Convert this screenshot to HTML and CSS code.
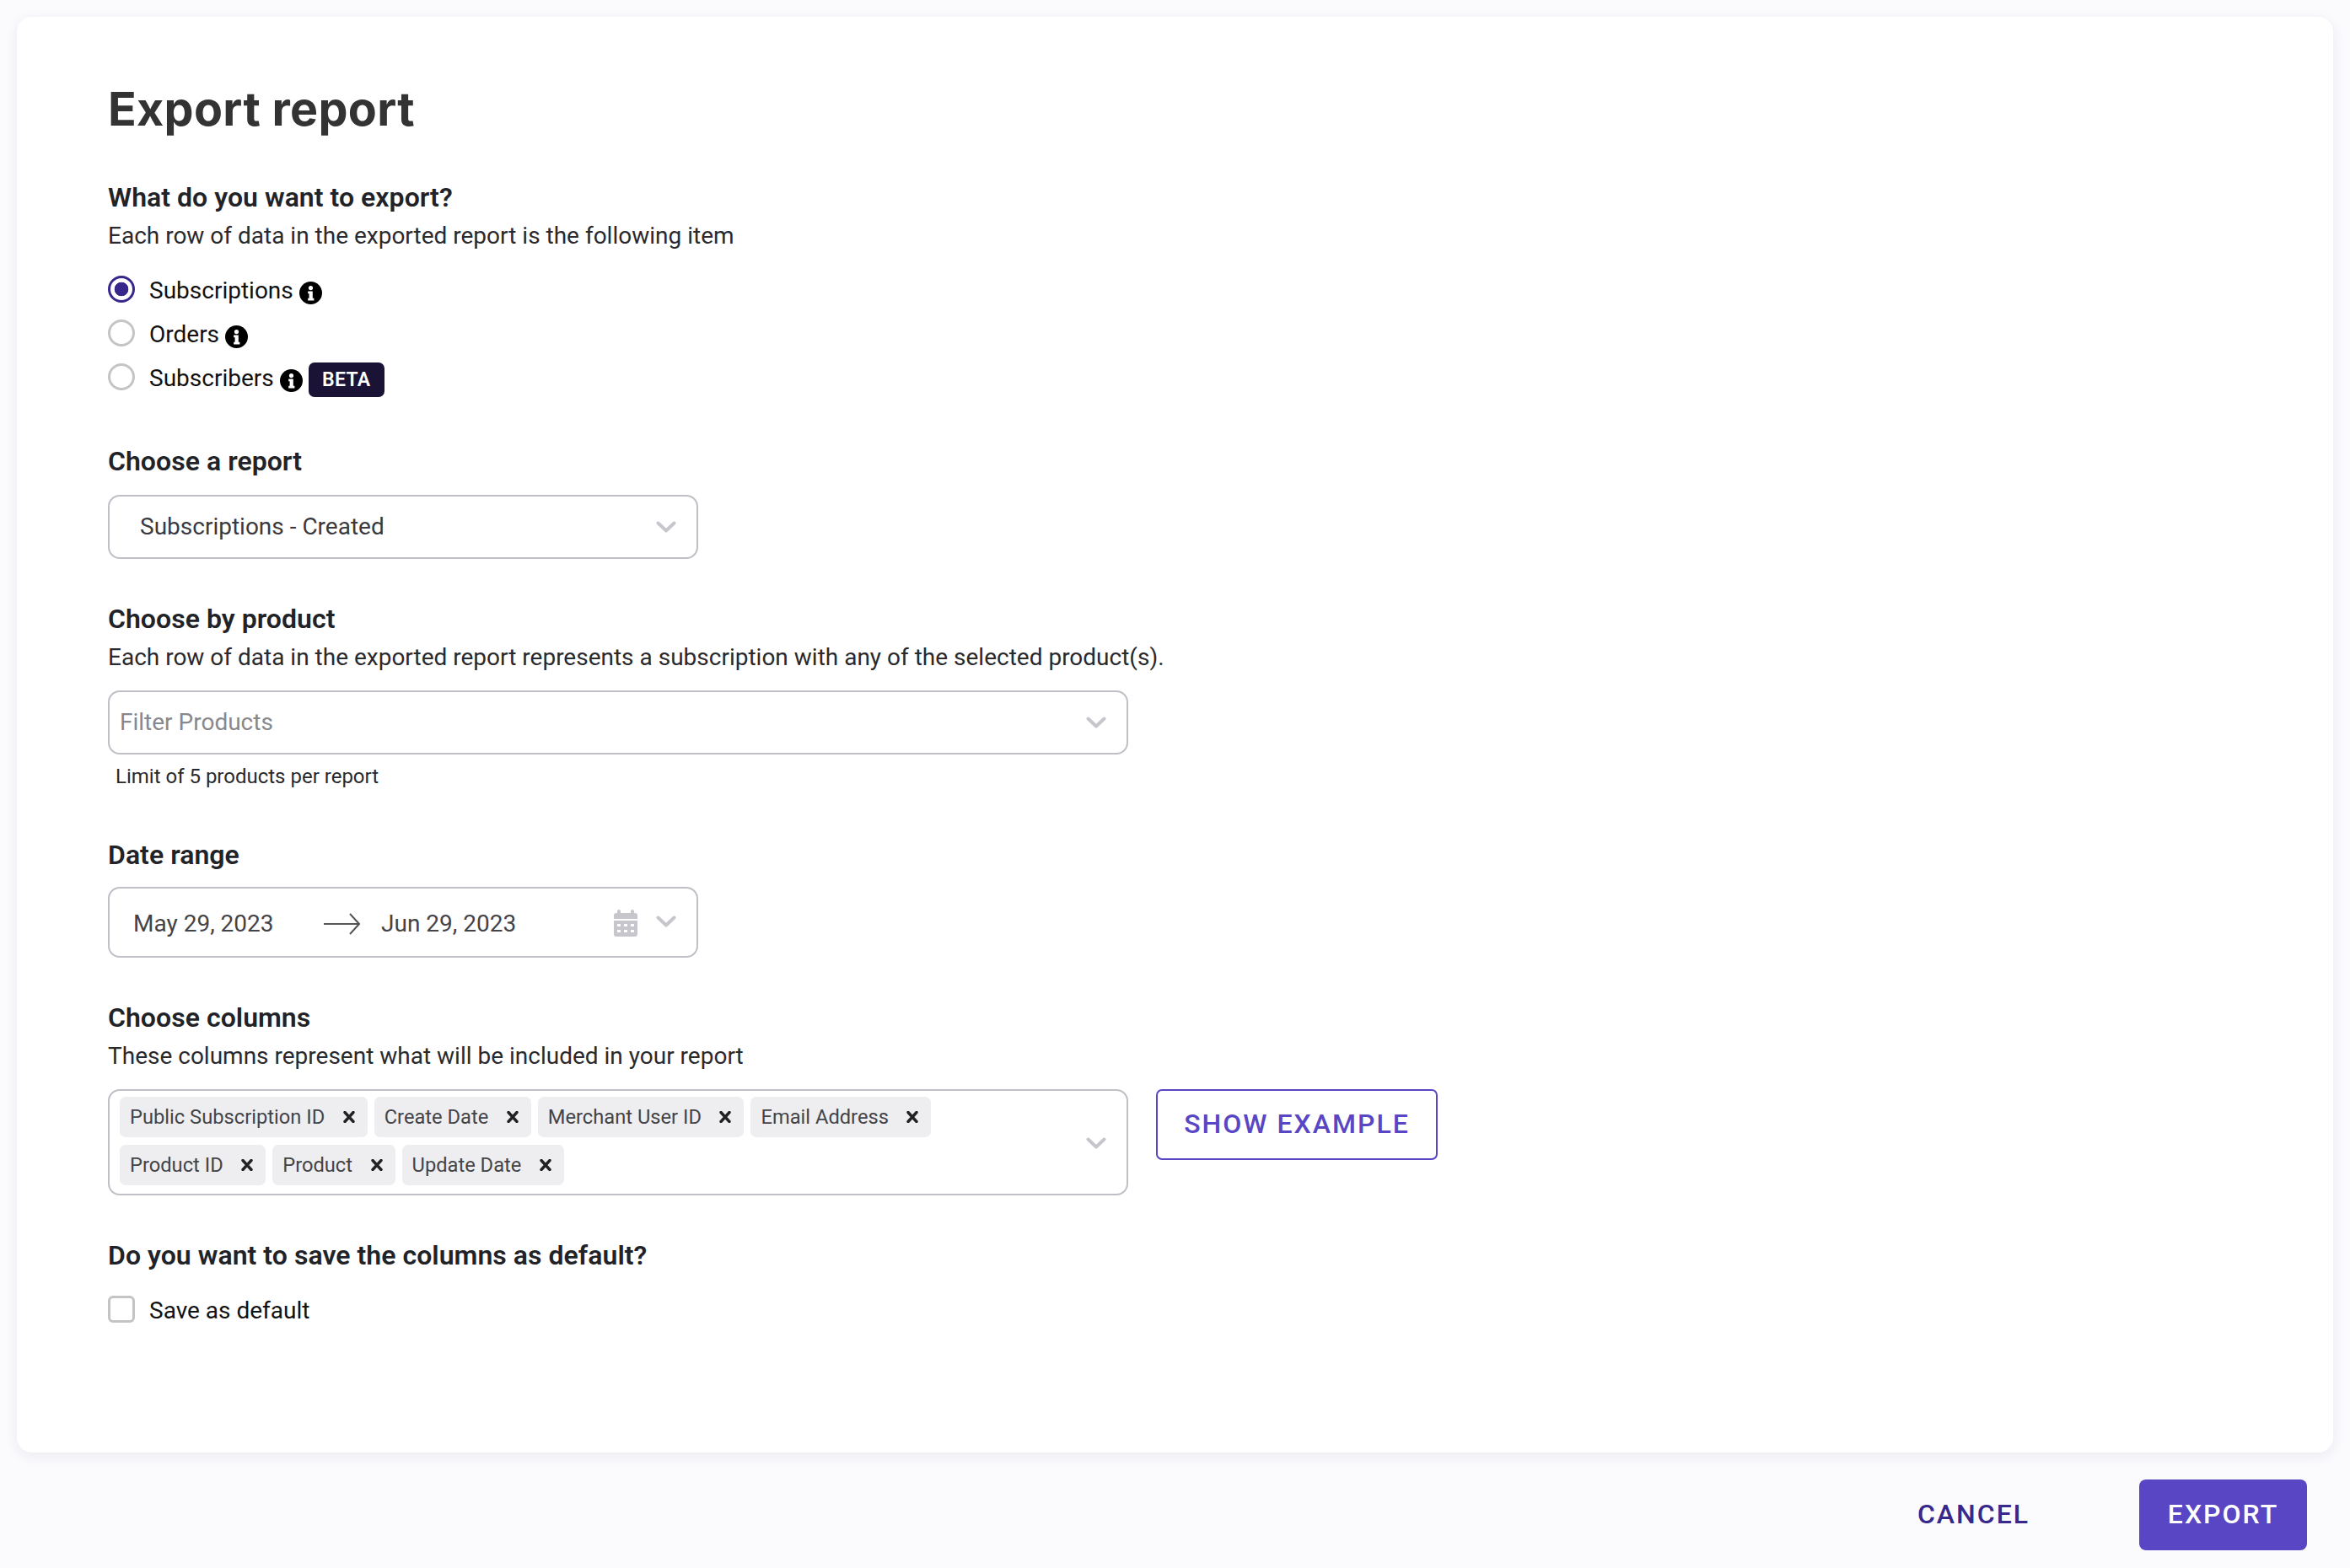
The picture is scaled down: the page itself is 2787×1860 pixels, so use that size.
FILE: index.html
```html
<!DOCTYPE html>
<html lang="en">
<head>
<meta charset="utf-8">
<title>Export report</title>
<link rel="stylesheet" href="styles.css">
</head>
<body>
<svg class="sprite" width="0" height="0" aria-hidden="true">
  <symbol id="chev" viewBox="0 0 24 14"><path d="M2.5 2.5 12 11.5 21.5 2.5" fill="none" stroke="currentColor" stroke-width="4" stroke-linecap="round" stroke-linejoin="round"/></symbol>
  <symbol id="info" viewBox="0 0 27 27"><circle cx="13.5" cy="13.5" r="13.5" fill="#000"/><circle cx="13.5" cy="7.6" r="2.6" fill="#fff"/><path d="M10.2 11.6h5.6v8.2h1.6v2.6h-7.2v-2.6h1.4v-5.6h-1.4z" fill="#fff"/></symbol>
  <symbol id="x" viewBox="0 0 14 14"><path d="M2 1.5 12 12.5M12 1.5 2 12.5" fill="none" stroke="#222" stroke-width="3.4" stroke-linecap="round"/></symbol>
</svg>
<main class="card">
  <h1 class="title">Export report</h1>

  <h2 class="heading">What do you want to export?</h2>
  <p class="desc">Each row of data in the exported report is the following item</p>
  <div class="radios">
    <label class="radio-row"><span class="radio radio-on"></span><span class="radio-label">Subscriptions</span><svg class="info"><use href="#info"/></svg></label>
    <label class="radio-row"><span class="radio"></span><span class="radio-label">Orders</span><svg class="info"><use href="#info"/></svg></label>
    <label class="radio-row"><span class="radio"></span><span class="radio-label">Subscribers</span><svg class="info"><use href="#info"/></svg><span class="badge">BETA</span></label>
  </div>

  <h2 class="heading gap-report">Choose a report</h2>
  <div class="field field-narrow field-report">
    <span class="value">Subscriptions - Created</span>
    <svg class="chev"><use href="#chev"/></svg>
  </div>

  <h2 class="heading gap-section">Choose by product</h2>
  <p class="desc">Each row of data in the exported report represents a subscription with any of the selected product(s).</p>
  <div class="field field-wide field-product">
    <span class="value placeholder">Filter Products</span>
    <svg class="chev"><use href="#chev"/></svg>
  </div>
  <p class="hint">Limit of 5 products per report</p>

  <h2 class="heading gap-date">Date range</h2>
  <div class="field field-narrow field-date">
    <span class="date date-start">May 29, 2023</span>
    <svg class="arrow" viewBox="0 0 44 26"><path d="M1 13H42M32 1 43 13 32 25" fill="none" stroke="#555" stroke-width="2"/></svg>
    <span class="date date-end">Jun 29, 2023</span>
    <svg class="calendar" viewBox="0 0 28 32"><path d="M6 0a2 2 0 0 1 2 2v2h12V2a2 2 0 0 1 4 0v2h1a3 3 0 0 1 3 3v4H0V7a3 3 0 0 1 3-3h1V2a2 2 0 0 1 2-2zM0 13h28v16a3 3 0 0 1-3 3H3a3 3 0 0 1-3-3zm4 4v3h4v-3zm8 0v3h4v-3zm8 0v3h4v-3zM4 24v3h4v-3zm8 0v3h4v-3zm8 0v3h4v-3z" fill="#c6c6cc" fill-rule="evenodd"/></svg>
    <svg class="chev"><use href="#chev"/></svg>
  </div>

  <h2 class="heading gap-section">Choose columns</h2>
  <p class="desc">These columns represent what will be included in your report</p>
  <div class="columns-row">
    <div class="field-tags">
      <div class="tags">
        <span class="tag">Public Subscription ID<svg class="tag-x"><use href="#x"/></svg></span>
        <span class="tag">Create Date<svg class="tag-x"><use href="#x"/></svg></span>
        <span class="tag">Merchant User ID<svg class="tag-x"><use href="#x"/></svg></span>
        <span class="tag">Email Address<svg class="tag-x"><use href="#x"/></svg></span>
        <span class="tag">Product ID<svg class="tag-x"><use href="#x"/></svg></span>
        <span class="tag">Product<svg class="tag-x"><use href="#x"/></svg></span>
        <span class="tag">Update Date<svg class="tag-x"><use href="#x"/></svg></span>
      </div>
      <svg class="chev"><use href="#chev"/></svg>
    </div>
    <button class="btn-outline" type="button"><span class="btn-label">SHOW EXAMPLE</span></button>
  </div>

  <h2 class="heading gap-section">Do you want to save the columns as default?</h2>
  <label class="check-row"><span class="checkbox"></span><span class="radio-label">Save as default</span></label>
</main>
<footer class="footer">
  <button class="btn-text" type="button"><span class="btn-label">CANCEL</span></button>
  <button class="btn-primary" type="button"><span class="btn-label">EXPORT</span></button>
</footer>
</body>
</html>
```
FILE: styles.css
```css
* { box-sizing: border-box; }
html, body { margin: 0; padding: 0; }
body {
  width: 2787px;
  height: 1860px;
  background: #fbfbfe;
  font-family: Roboto, "Liberation Sans", sans-serif;
  color: #212121;
  overflow: hidden;
}
.sprite { position: absolute; }
.card {
  margin: 20px 20px 0;
  height: 1703px;
  padding: 77px 108px 0;
  background: #fff;
  border-radius: 18px;
  box-shadow: 0 4px 16px rgba(40, 40, 80, 0.08);
}
.title {
  margin: 0 0 54px;
  font: 700 55.6px/64px Inter, sans-serif;
  letter-spacing: 0.3px;
  color: #333;
}
.heading {
  margin: 0;
  font-size: 32px;
  line-height: 38px;
  font-weight: 600;
  letter-spacing: 0.04px;
  color: #212328;
}
.desc {
  margin: 9px 0 0;
  font-size: 28px;
  line-height: 36px;
  color: #2a2a2e;
}
.radios {
  margin-top: 29px;
  display: flex;
  flex-direction: column;
  gap: 20px;
}
.radio-row, .check-row {
  display: flex;
  align-items: center;
  height: 32px;
}
.radio {
  width: 32px;
  height: 32px;
  flex: none;
  border-radius: 50%;
  border: 3px solid #c4c4c4;
  background: #fff;
  margin-right: 17px;
}
.radio-on {
  border-color: #38288c;
  background: radial-gradient(circle, #38288c 0 8px, #fff 8.6px);
}
.radio-label {
  margin-top: 3px;
  font-size: 28px;
  line-height: 36px;
  color: #111;
}
.info {
  width: 27px;
  height: 27px;
  flex: none;
  margin: 8px 0 0 7px;
}
.badge {
  margin: 7px 0 0 7px;
  width: 90px;
  height: 41px;
  flex: none;
  display: flex;
  align-items: center;
  justify-content: center;
  background: #1a1335;
  color: #fff;
  border-radius: 7px;
  font-size: 23px;
  font-weight: 600;
  letter-spacing: 0.3px;
}
.gap-report { margin-top: 65px; }
.gap-section { margin-top: 52px; }
.gap-date { margin-top: 58px; }
.field, .field-tags {
  border: 2px solid #bfbfc6;
  border-radius: 14px;
  background: #fff;
  display: flex;
  align-items: center;
}
.field-narrow { width: 700px; }
.field-wide { width: 1210px; }
.field-report { margin-top: 21px; height: 76px; padding: 0 24px 0 36px; }
.field-product { margin-top: 21px; height: 76px; padding: 0 24px 0 12px; }
.field-date { margin-top: 19px; height: 84px; padding: 0 24px 0 28px; }
.value {
  flex: 1;
  font-size: 28px;
  line-height: 36px;
  color: #3a3a3e;
}
.placeholder { color: #88888c; }
.chev {
  width: 24px;
  height: 14px;
  flex: none;
  color: #c6c6cc;
}
.field-date .chev { margin: -3px 0 0 22px; }
.date {
  margin-top: 3px;
  font-size: 28px;
  line-height: 36px;
  color: #444448;
}
.date-start { width: 225px; flex: none; }
.arrow { width: 44px; height: 26px; flex: none; margin-top: 4px; }
.date-end { margin-left: 25px; flex: 1; }
.calendar { width: 28px; height: 32px; flex: none; margin-top: 2px; }
.hint {
  margin: 10px 0 0 9px;
  font-size: 24px;
  line-height: 32px;
  color: #2a2a2e;
}
.columns-row {
  margin-top: 21px;
  display: flex;
  align-items: flex-start;
  gap: 33px;
}
.field-tags {
  width: 1210px;
  height: 126px;
  padding: 7px 24px 0 12px;
  align-items: flex-start;
}
.field-tags .chev { margin-top: 48px; }
.tags {
  flex: 1;
  display: flex;
  flex-wrap: wrap;
  align-content: flex-start;
  gap: 9px 8px;
  padding-right: 60px;
}
.tag {
  height: 48px;
  display: inline-flex;
  align-items: center;
  padding: 0 15px 0 12px;
  background: #eeeef0;
  border-radius: 7px;
  font-size: 23.7px;
  color: #444448;
}
.tag-x {
  width: 14px;
  height: 14px;
  flex: none;
  margin-left: 21.5px;
}
.btn-outline {
  width: 334px;
  height: 84px;
  padding: 0;
  border: 2px solid #5846c4;
  border-radius: 7px;
  background: #fff;
  color: #5846c4;
  font: 500 32px Roboto, sans-serif;
  letter-spacing: 2px;
}
.btn-label { position: relative; top: -1px; }
.check-row { margin-top: 29px; }
.checkbox {
  width: 32px;
  height: 32px;
  flex: none;
  border: 3px solid #c4c4c4;
  border-radius: 6px;
  background: #fff;
  margin-right: 17px;
}
.footer {
  display: flex;
  justify-content: flex-end;
  align-items: center;
  margin-top: 32px;
  padding-right: 51px;
  gap: 130px;
}
.btn-text {
  padding: 0;
  border: 0;
  background: none;
  color: #38288c;
  font: 500 32px Roboto, sans-serif;
  letter-spacing: 2px;
}
.btn-primary {
  width: 199px;
  height: 84px;
  padding: 0;
  border: 0;
  border-radius: 8px;
  background: #5946c4;
  color: #fff;
  font: 500 32px Roboto, sans-serif;
  letter-spacing: 2px;
}
```
